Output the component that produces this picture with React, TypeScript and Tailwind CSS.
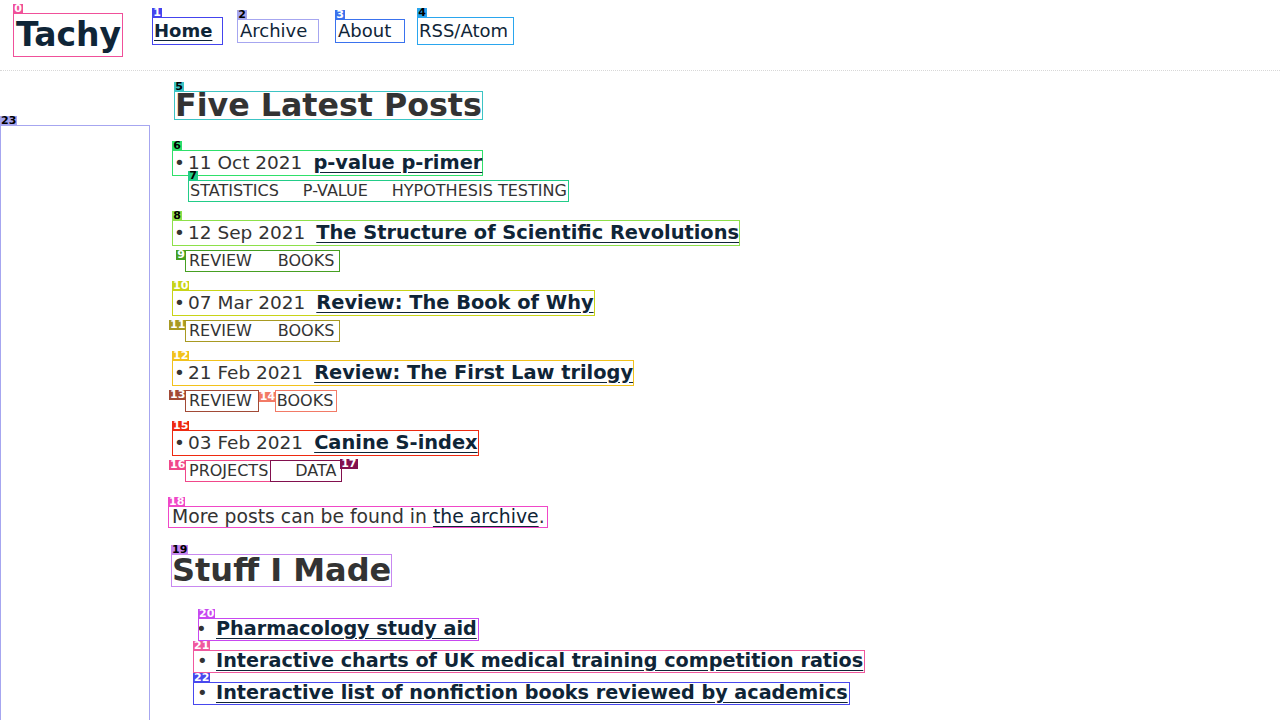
import type { ReactNode } from "react";

type MarkProps = {
  n: number;
  box: string;
  tag: string;
  pos?: string;
  className?: string;
  children?: ReactNode;
};

function Mark({ n, box, tag, pos = "left-[-1px] top-[-10px]", className = "", children }: MarkProps) {
  return (
    <div className={`relative border ${box} ${className}`}>
      {children}
      <span
        className={`absolute ${pos} ${tag} h-[10px] min-w-[10px] px-[1px] text-center font-['DejaVu_Sans',sans-serif] text-[11px] font-bold leading-[10px]`}
      >
        {n}
      </span>
    </div>
  );
}

type Post = {
  date: string;
  title: string;
  n: number;
  box: string;
  tag: string;
};

const posts: Post[] = [
  { date: "11 Oct 2021", title: "p-value p-rimer", n: 6, box: "border-[#2fe06a]", tag: "bg-[#2fe06a] text-black" },
  { date: "12 Sep 2021", title: "The Structure of Scientific Revolutions", n: 8, box: "border-[#8ee04a]", tag: "bg-[#8ee04a] text-black" },
  { date: "07 Mar 2021", title: "Review: The Book of Why", n: 10, box: "border-[#c8d418]", tag: "bg-[#c8d418] text-white" },
  { date: "21 Feb 2021", title: "Review: The First Law trilogy", n: 12, box: "border-[#f2c21c]", tag: "bg-[#f2c21c] text-white" },
  { date: "03 Feb 2021", title: "Canine S-index", n: 15, box: "border-[#ee2a10]", tag: "bg-[#ee2a10] text-white" },
];

function Tags({ i }: { i: number }) {
  if (i === 0)
    return (
      <Mark n={7} box="border-[#22cc88]" tag="bg-[#22cc88] text-black" className="ml-[16px] flex w-fit gap-[24px] px-[1px] leading-[20px]">
        <span>STATISTICS</span>
        <span>P-VALUE</span>
        <span>HYPOTHESIS TESTING</span>
      </Mark>
    );
  if (i === 1 || i === 2) {
    const two = i === 1;
    return (
      <Mark
        n={two ? 9 : 11}
        box={two ? "border-[#46a022]" : "border-[#a89a22]"}
        tag={two ? "bg-[#46a022] text-white" : "bg-[#a89a22] text-white"}
        pos={two ? "left-[-10px] top-[-1px]" : "left-[-17px] top-[-1px]"}
        className="ml-[13px] flex w-fit gap-[26px] pl-[3px] pr-[5px] leading-[20px]"
      >
        <span>REVIEW</span>
        <span>BOOKS</span>
      </Mark>
    );
  }
  if (i === 3)
    return (
      <div className="ml-[13px] flex leading-[20px]">
        <Mark n={13} box="border-[#a24a36]" tag="bg-[#a24a36] text-white" pos="left-[-17px] top-[-1px]" className="pl-[3px] pr-[6px]">
          REVIEW
        </Mark>
        <Mark n={14} box="border-[#f27a66]" tag="bg-[#f27a66] text-white" pos="left-[-17px] top-[1px]" className="ml-[16px] pl-[1px] pr-[3px]">
          BOOKS
        </Mark>
      </div>
    );
  return (
    <div className="ml-[13px] flex leading-[20px]">
      <Mark n={16} box="border-[#f0488a]" tag="bg-[#f0488a] text-white" pos="left-[-17px] top-[-1px]" className="pl-[3px] pr-[2px]">
        PROJECTS
      </Mark>
      <Mark n={17} box="border-[#82104e]" tag="bg-[#82104e] text-white" pos="right-[-17px] top-[-2px]" className="ml-[-1px] pl-[24px] pr-[4px]">
        DATA
      </Mark>
    </div>
  );
}

const made = [
  { t: "Pharmacology study aid", n: 20, box: "border-[#c848f0]", tag: "bg-[#c848f0] text-white", lead: "ml-[5px] pl-[17px]" },
  { t: "Interactive charts of UK medical training competition ratios", n: 21, box: "border-[#f0589e]", tag: "bg-[#f0589e] text-white", lead: "pl-[22px]" },
  { t: "Interactive list of nonfiction books reviewed by academics", n: 22, box: "border-[#4848ee]", tag: "bg-[#4848ee] text-white", lead: "pl-[22px]" },
];

export default function App() {
  return (
    <div className="min-h-[720px] overflow-hidden bg-white font-['DejaVu_Sans',sans-serif] text-[#333]">
      <header className="flex h-[71px] items-start border-b border-dotted border-[#d8d8d8] px-[13px] pt-[13px]">
        <Mark n={0} box="border-[#f0509a]" tag="bg-[#f0509a] text-white" className="h-[44px] w-[110px]">
          <span className="block pl-[2px] text-[33px] font-bold leading-[42px] text-[#0f2537]">Tachy</span>
        </Mark>
        <nav className="ml-[29px] flex h-[36px] items-center text-[18px] text-[#0f2537]">
          <Mark n={1} box="border-[#4444ee]" tag="bg-[#4444ee] text-white" className="h-[28px] w-[71px] pl-[1px] leading-[26px]">
            <span className="font-bold underline underline-offset-[3px]">Home</span>
          </Mark>
          <Mark n={2} box="border-[#a6a6f0]" tag="bg-[#a6a6f0] text-black" className="ml-[14px] h-[24px] w-[82px] pl-[2px] leading-[22px]">
            Archive
          </Mark>
          <Mark n={3} box="border-[#3a72ee]" tag="bg-[#3a72ee] text-white" className="ml-[16px] h-[24px] w-[70px] pl-[2px] leading-[22px]">
            About
          </Mark>
          <Mark n={4} box="border-[#2aa6ee]" tag="bg-[#2aa6ee] text-black" className="ml-[12px] h-[28px] w-[97px] pl-[1px] leading-[26px]">
            RSS/Atom
          </Mark>
        </nav>
      </header>

      <div className="flex items-start">
        <Mark n={23} box="border-[#a6a6f0]" tag="bg-[#a6a6f0] text-black" className="mt-[54px] h-[620px] w-[150px] shrink-0" />

        <main className="ml-[22px] mt-[20px] flex-1">
          <Mark n={5} box="border-[#3cc4c4]" tag="bg-[#3cc4c4] text-black" className="ml-[2px] w-fit">
            <h1 className="text-[31.7px] font-bold leading-[27px]">Five Latest Posts</h1>
          </Mark>

          <ul className="mt-[30px] flex flex-col gap-[18px] text-[18.5px]">
            {posts.map((p, i) => (
              <li key={p.title} className="flex flex-col gap-[4px]">
                <Mark n={p.n} box={p.box} tag={p.tag} className="flex w-fit items-center leading-[24px]">
                  <span className="w-[15px] pl-[1px]">•</span>
                  <span>{p.date}</span>
                  <a className="ml-[11px] text-[19.4px] font-bold text-[#0f2537] underline underline-offset-[3px]">{p.title}</a>
                </Mark>
                <div className="text-[16px]">
                  <Tags i={i} />
                </div>
              </li>
            ))}
          </ul>

          <Mark n={18} box="border-[#f048c8]" tag="bg-[#f048c8] text-white" className="ml-[-4px] mt-[24px] w-fit pl-[3px] pr-[2px] text-[18.8px] leading-[20px]">
            More posts can be found in{" "}
            <a className="text-[#0f2537] underline underline-offset-[3px]">the archive</a>.
          </Mark>

          <Mark n={19} box="border-[#c888f0]" tag="bg-[#c888f0] text-black" className="ml-[-1px] mt-[26px] w-fit">
            <h2 className="text-[32px] font-bold leading-[31px]">Stuff I Made</h2>
          </Mark>

          <ul className="mt-[31px] flex flex-col gap-[9px]">
            {made.map((m) => (
              <li key={m.t} className="relative ml-[21px] flex">
                {m.n === 20 && <span className="absolute left-[3px] top-[1px] text-[18px] leading-[20px]">•</span>}
                <Mark n={m.n} box={m.box} tag={m.tag} className={`w-fit pr-[1px] leading-[20px] ${m.lead}`}>
                  {m.n !== 20 && <span className="absolute left-[3px] top-0 text-[18px]">•</span>}
                  <a className="text-[19.2px] font-bold text-[#0f2537] underline underline-offset-[3px]">{m.t}</a>
                </Mark>
              </li>
            ))}
          </ul>
        </main>
      </div>
    </div>
  );
}
